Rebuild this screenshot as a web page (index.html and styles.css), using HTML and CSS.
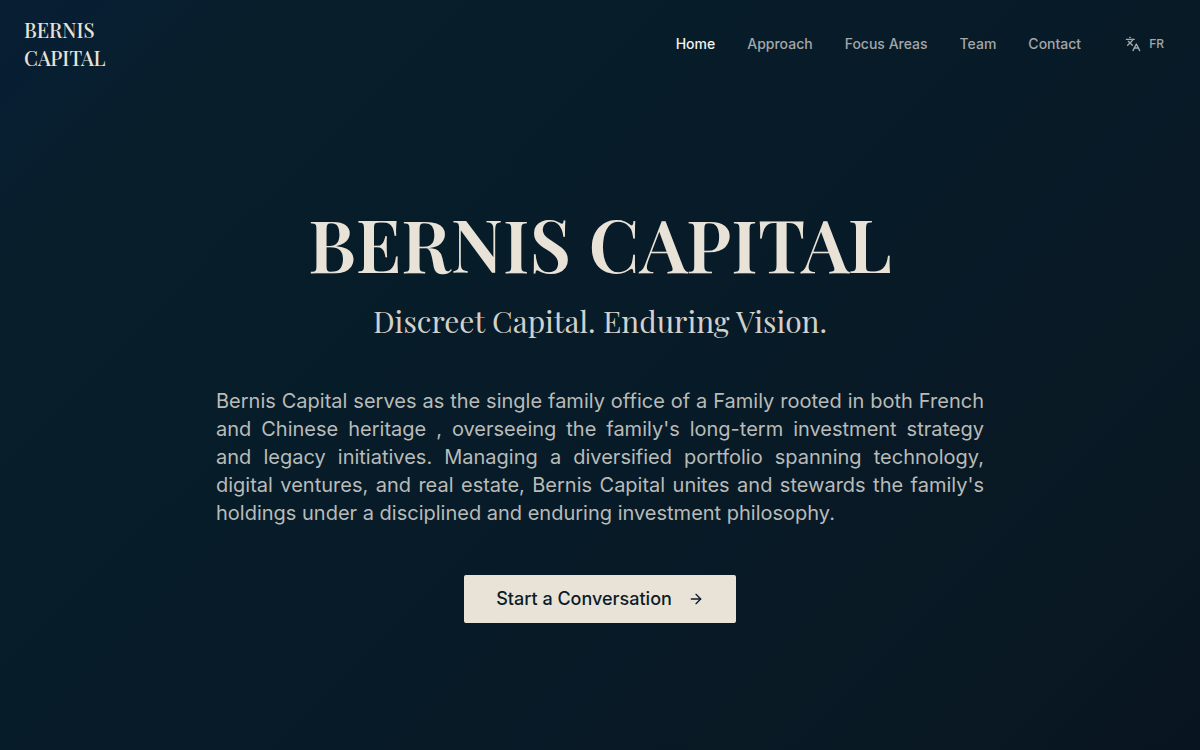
FILE: index.html
```html
<!DOCTYPE html>
<html lang="en">
<head>
  <meta charset="UTF-8" />
  <meta name="viewport" content="width=device-width,initial-scale=1"/>
  <title>Bernis Capital</title>
  <link rel="stylesheet" href="styles.css">
</head>
<body>
  <header class="navbar">
    <a href="#" class="brand">BERNIS<br>CAPITAL</a>
    <nav class="nav-links">
      <a href="#" class="active">Home</a>
      <a href="#approach">Approach</a>
      <a href="#focus">Focus Areas</a>
      <a href="#team">Team</a>
      <a href="#contact">Contact</a>
      <button type="button" class="lang-btn">
        <svg width="16" height="16" viewBox="0 0 24 24" fill="none" stroke="currentColor" stroke-width="2" stroke-linecap="round" stroke-linejoin="round" aria-hidden="true">
          <path d="m5 8 6 6"/>
          <path d="m4 14 6-6 2-3"/>
          <path d="M2 5h12"/>
          <path d="M7 2h1"/>
          <path d="m22 22-5-10-5 10"/>
          <path d="M14 18h6"/>
        </svg>
        FR
      </button>
    </nav>
  </header>

  <main class="hero">
    <h1>BERNIS CAPITAL</h1>
    <p class="tagline">Discreet Capital. Enduring Vision.</p>
    <p class="intro">Bernis Capital serves as the single family office of a Family rooted in both French and Chinese heritage , overseeing the family's long-term investment strategy and legacy initiatives. Managing a diversified portfolio spanning technology, digital ventures, and real estate, Bernis Capital unites and stewards the family's holdings under a disciplined and enduring investment philosophy.</p>
    <button type="button" class="cta">
      Start a Conversation
      <svg width="16" height="16" viewBox="0 0 24 24" fill="none" stroke="currentColor" stroke-width="2" stroke-linecap="round" stroke-linejoin="round" aria-hidden="true">
        <path d="M5 12h14"/>
        <path d="m12 5 7 7-7 7"/>
      </svg>
    </button>
  </main>
</body>
</html>
```
FILE: styles.css
```css
* {
  box-sizing: border-box;
}

body {
  display: flex;
  flex-direction: column;
  min-height: 100vh;
  margin: 0;
  font-family: Inter, sans-serif;
  color: #b9bbb9;
  background: linear-gradient(135deg, #071e34 0%, #081f31 8%, #081e2b 14%, #071b28 50%, #091823 88%, #08141f 100%);
}

.navbar {
  display: flex;
  justify-content: space-between;
  align-items: center;
  padding: 16px 24px;
}

.brand {
  font-family: "Playfair Display", "Liberation Serif", serif;
  font-size: 20px;
  line-height: 28px;
  font-weight: 500;
  color: #e9e3d7;
  text-decoration: none;
}

.nav-links {
  display: flex;
  align-items: center;
  gap: 32px;
}

.nav-links a {
  font-size: 14px;
  line-height: 20px;
  font-weight: 500;
  color: #a3a7a8;
  text-decoration: none;
}

.nav-links .active {
  color: #f4f2ed;
}

.lang-btn {
  display: flex;
  align-items: center;
  gap: 8px;
  padding: 8px 12px;
  border: 0;
  background: none;
  font-family: inherit;
  font-size: 12px;
  line-height: 16px;
  font-weight: 500;
  color: #a3a7a8;
  cursor: pointer;
}

.hero {
  flex: 1;
  display: flex;
  flex-direction: column;
  align-items: center;
  justify-content: center;
  padding: 64px 24px 72px;
}

.hero h1 {
  margin: 0 0 24px;
  font-family: "Playfair Display", "Liberation Serif", serif;
  font-size: 73px;
  line-height: 72px;
  font-weight: 600;
  color: #e9e3d7;
}

.tagline {
  margin: 0 0 48px;
  font-family: "Playfair Display", "Liberation Serif", serif;
  font-size: 30px;
  line-height: 36px;
  color: #d2d0ca;
}

.intro {
  max-width: 768px;
  margin: 0 0 48px;
  font-size: 20px;
  line-height: 28px;
  text-align: justify;
}

.cta {
  display: flex;
  align-items: center;
  gap: 16px;
  padding: 10px 32px;
  border: 0;
  border-radius: 2px;
  background: #e9e3d7;
  font-family: inherit;
  font-size: 18px;
  line-height: 28px;
  font-weight: 500;
  color: #0b1c2b;
  cursor: pointer;
}
```
